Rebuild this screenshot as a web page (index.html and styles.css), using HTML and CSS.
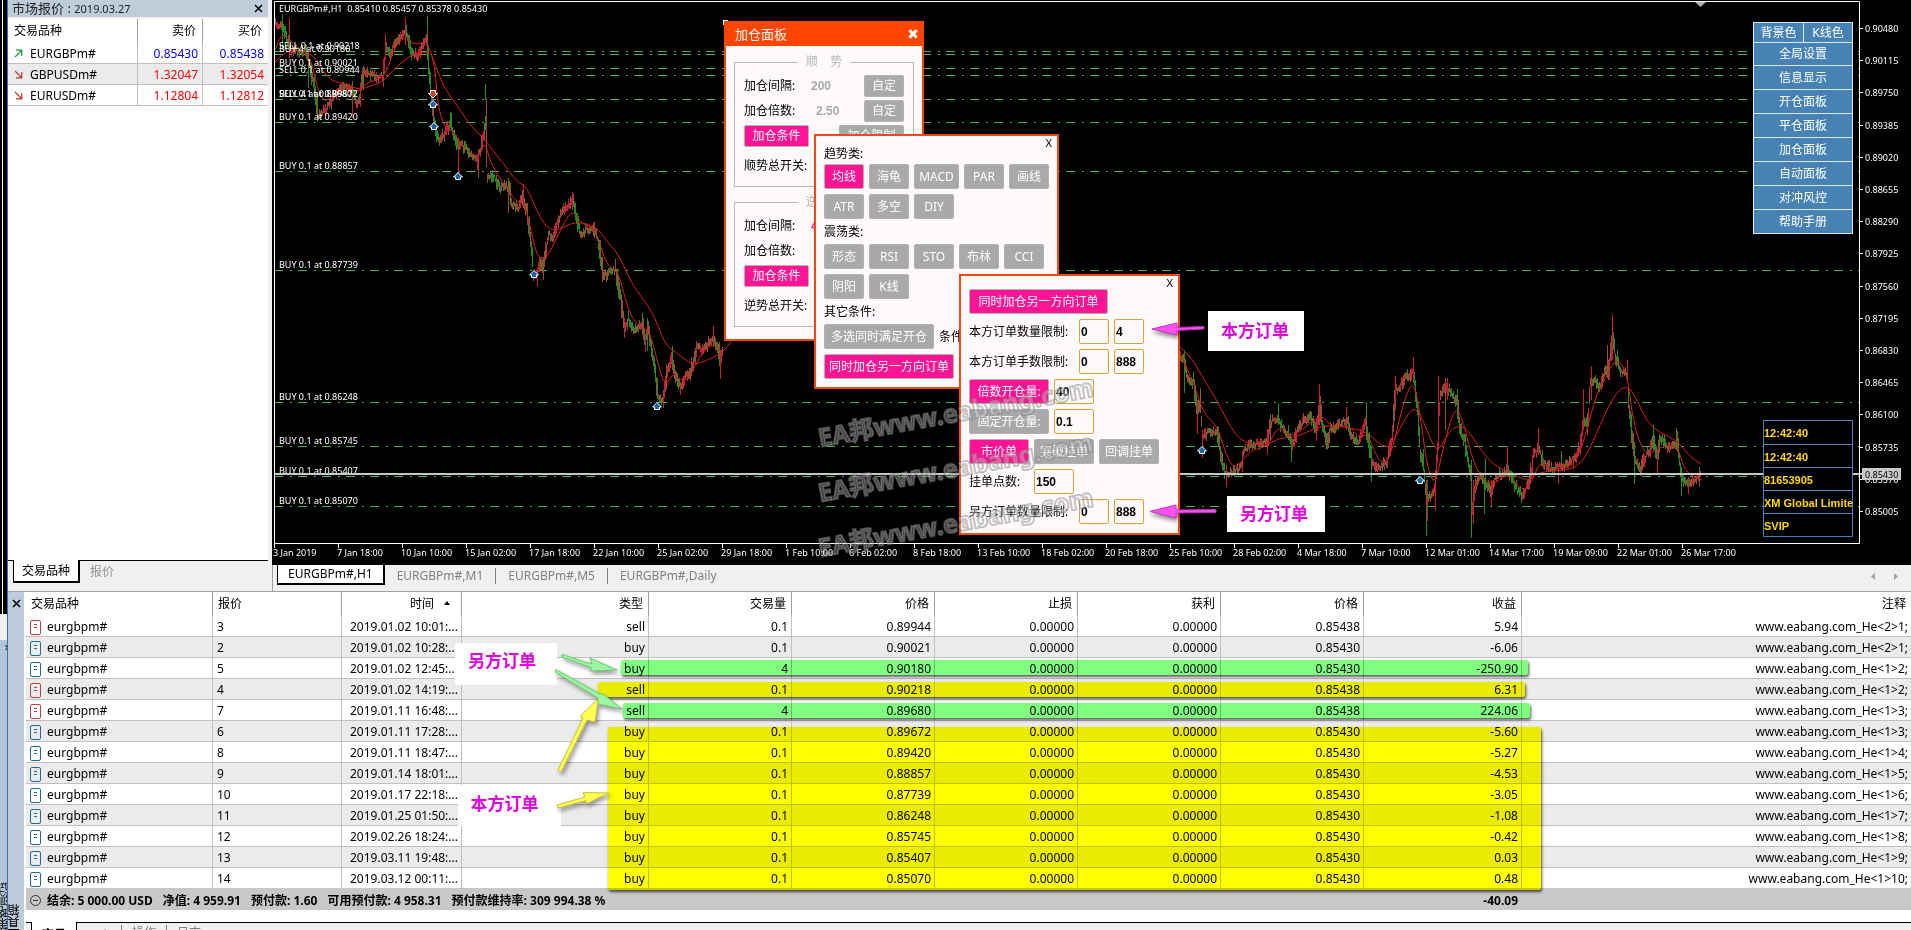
FILE: index.html
```html
<!DOCTYPE html>
<html lang="zh-CN">
<head>
<meta charset="utf-8">
<title>EURGBPm#,H1</title>
<link rel="stylesheet" href="styles.css">
</head>
<body>
<div class="app">
  <aside class="behind" aria-hidden="true">
    <div class="behind-chart"></div>
    <div class="behind-gap"></div>
    <div class="behind-side"><span class="behind-x">✕</span><span class="vertical">策略测试</span></div>
  </aside>

  <div class="main">
    <div class="top">
      <section class="market">
        <header class="market-title">
          <h1>市场报价 : <span>2019.03.27</span></h1>
          <button class="close" aria-label="关闭"><svg width="9" height="9" viewBox="0 0 9 9"><path d="M1 1L8 8M8 1L1 8"/></svg></button>
        </header>
        <table class="quotes">
          <colgroup><col class="q-name"><col><col></colgroup>
          <thead><tr><th>交易品种</th><th>卖价</th><th>买价</th></tr></thead>
          <tbody>
            <tr class="up"><td><svg class="dir" width="9" height="9" viewBox="0 0 9 9"><path d="M1 8L7.5 1.5M2 1.2H7.8V7"/></svg>EURGBPm#</td><td>0.85430</td><td>0.85438</td></tr>
            <tr class="down"><td><svg class="dir" width="9" height="9" viewBox="0 0 9 9"><path d="M1 1L7.5 7.5M7.8 2V7.8H2"/></svg>GBPUSDm#</td><td>1.32047</td><td>1.32054</td></tr>
            <tr class="down"><td><svg class="dir" width="9" height="9" viewBox="0 0 9 9"><path d="M1 1L7.5 7.5M7.8 2V7.8H2"/></svg>EURUSDm#</td><td>1.12804</td><td>1.12812</td></tr>
          </tbody>
        </table>
        <div class="market-fill"></div>
        <nav class="market-tabs"><button class="on">交易品种</button><button>报价</button></nav>
      </section>

      <section class="chart-col">
        <div class="chart">
          <svg id="plot" class="plot" viewBox="272 0 1639 565"></svg>

          <section class="win win-add">
            <header><h2>加仓面板</h2><button aria-label="关闭">✖</button></header>
            <div class="win-body">
              <fieldset>
                <legend>顺    势</legend>
                <div class="line"><span>加仓间隔:</span><b class="v1">200</b><button class="gray w40">自定</button></div>
                <div class="line"><span>加仓倍数:</span><b class="v2">2.50</b><button class="gray w40">自定</button></div>
                <div class="line"><button class="pink w65">加仓条件</button><button class="gray w65">加仓限制</button></div>
                <div class="line last"><span>顺势总开关:</span></div>
              </fieldset>
              <fieldset>
                <legend>逆    势</legend>
                <div class="line"><span>加仓间隔:</span><b class="v1 hot">400</b><button class="gray w40">自定</button></div>
                <div class="line"><span>加仓倍数:</span><b class="v2">2.50</b><button class="gray w40">自定</button></div>
                <div class="line"><button class="pink w65">加仓条件</button><button class="gray w65">加仓限制</button></div>
                <div class="line last"><span>逆势总开关:</span></div>
              </fieldset>
            </div>
          </section>

          <section class="win win-cond">
            <button class="x" aria-label="关闭">X</button>
            <h3>趋势类:</h3>
            <div class="btns"><button class="pink w40">均线</button><button class="gray w40">海龟</button><button class="gray w45">MACD</button><button class="gray w40">PAR</button><button class="gray w40">画线</button></div>
            <div class="btns"><button class="gray w40">ATR</button><button class="gray w40">多空</button><button class="gray w40">DIY</button></div>
            <h3>震荡类:</h3>
            <div class="btns"><button class="gray w40">形态</button><button class="gray w40">RSI</button><button class="gray w40">STO</button><button class="gray w40">布林</button><button class="gray w40">CCI</button></div>
            <div class="btns"><button class="gray w40">阴阳</button><button class="gray w40">K线</button></div>
            <h3>其它条件:</h3>
            <div class="btns"><button class="gray w110">多选同时满足开仓</button><span>条件</span></div>
            <div class="btns"><button class="pink w130">同时加仓另一方向订单</button></div>
          </section>

          <section class="win win-limit">
            <button class="x" aria-label="关闭">X</button>
            <div class="btns"><button class="pink w139">同时加仓另一方向订单</button></div>
            <div class="btns"><label for="n1">本方订单数量限制:</label><input id="n1" class="w30" value="0"><input aria-label="本方订单数量上限" class="w30" value="4"></div>
            <div class="btns"><label for="n2">本方订单手数限制:</label><input id="n2" class="w30" value="0"><input aria-label="本方订单手数上限" class="w30" value="888"></div>
            <div class="btns"><button class="pink w80">倍数开仓量:</button><input aria-label="倍数开仓量" class="w40" value="40"></div>
            <div class="btns"><button class="gray w80">固定开仓量:</button><input aria-label="固定开仓量" class="w40" value="0.1"></div>
            <div class="btns"><button class="pink w60">市价单</button><button class="gray w60">突破挂单</button><button class="gray w60">回调挂单</button></div>
            <div class="btns"><label class="short" for="n3">挂单点数:</label><input id="n3" class="w40" value="150"></div>
            <div class="btns"><label for="n4">另方订单数量限制:</label><input id="n4" class="w30" value="0"><input aria-label="另方订单数量上限" class="w30" value="888"></div>
          </section>

          <nav class="menu">
            <div class="menu-pair"><button>背景色</button><button>K线色</button></div>
            <button>全局设置</button><button>信息显示</button><button>开仓面板</button><button>平仓面板</button><button>加仓面板</button><button>自动面板</button><button>对冲风控</button><button>帮助手册</button>
          </nav>

          <ul class="info"><li>12:42:40</li><li>12:42:40</li><li>81653905</li><li>XM Global Limite</li><li>SVIP</li></ul>

          <svg class="marks" viewBox="272 0 1639 565">
            <g class="wm">
              <text transform="translate(820 447) rotate(-10.5)">EA邦www.eabang.com</text>
              <text transform="translate(820 502) rotate(-10.5)">EA邦www.eabang.com</text>
              <text transform="translate(820 557) rotate(-10.5)">EA邦www.eabang.com</text>
            </g>
            <g class="pinkarrow">
              <path d="M1204 326.500L1177 327.500V323L1152 329L1177 335V330.500L1204 329Z"/>
              <path d="M1216 509.500L1176 510V505L1150 511.500L1176 518V513L1216 512.500Z"/>
            </g>
          </svg>
          <span class="note n-own">本方订单</span>
          <span class="note n-other">另方订单</span>
        </div>
        <nav class="chart-tabs">
          <button class="on">EURGBPm#,H1</button><button>EURGBPm#,M1</button><button>EURGBPm#,M5</button><button>EURGBPm#,Daily</button>
          <span class="scrollers"><button aria-label="向左"><svg width="4" height="7" viewBox="0 0 4 7"><path d="M4 0V7L0 3.5Z"/></svg></button><button aria-label="向右"><svg width="4" height="7" viewBox="0 0 4 7"><path d="M0 0V7L4 3.5Z"/></svg></button></span>
        </nav>
      </section>
    </div>

    <section class="terminal">
      <div class="rail"><button class="close" aria-label="关闭"><svg width="9" height="9" viewBox="0 0 9 9"><path d="M1 1L8 8M8 1L1 8"/></svg></button><span class="vertical">工具箱</span></div>
      <div class="orders-wrap">
        <table class="orders">
          <colgroup><col class="c-sym"><col class="c-id"><col class="c-time"><col class="c-type"><col class="c-n"><col class="c-n"><col class="c-n"><col class="c-n"><col class="c-n"><col class="c-pl"><col></colgroup>
          <thead><tr><th>交易品种</th><th>报价</th><th>时间<svg class="sort" width="6" height="4" viewBox="0 0 6 4"><path d="M0 4H6L3 0Z"/></svg></th><th>类型</th><th>交易量</th><th>价格</th><th>止损</th><th>获利</th><th>价格</th><th>收益</th><th>注释</th></tr></thead>
          <tbody id="rows"></tbody>
          <tfoot><tr><td colspan="9"><svg class="minus" width="11" height="11" viewBox="0 0 11 11"><circle cx="5.5" cy="5.5" r="5"/><path d="M3 5.500H8"/></svg><span>结余: 5 000.00 USD</span><span>净值: 4 959.91</span><span>预付款: 1.60</span><span>可用预付款: 4 958.31</span><span>预付款维持率: 309 994.38 %</span></td><td>-40.09</td><td></td></tr></tfoot>
        </table>
        <nav class="term-tabs"><button class="on">交易</button><button>历史</button><button>操作</button><button>日志</button></nav>
        <div class="hl hl-g1"></div>
        <div class="hl hl-y1"></div>
        <div class="hl hl-g2"></div>
        <div class="hl hl-y2"></div>
        <span class="note t-other">另方订单</span>
        <span class="note t-own">本方订单</span>
        <svg class="arrows" width="200" height="180" viewBox="540 640 200 180">
          <g class="ga">
            <path d="M562 654.500L592 664L590 658L617 670L590 671L591.500 667.500L561.500 657Z"/>
            <path d="M556 669.500L600 694L603 694L622 709L598 704L598 698L555 672Z"/>
          </g>
          <g class="ya">
            <path d="M558 770L583 718L580 716L598 699L595 722L587 720L561 772Z"/>
            <path d="M557 805L585 797L583 792.500L609 793L586 804L586 800.500L558 808Z"/>
          </g>
        </svg>
      </div>
    </section>
  </div>
</div>
<script src="app.js"></script>
</body>
</html>
```
FILE: styles.css
```css
* { box-sizing: border-box; }
body { margin: 0; background: #f0f0f0; color: #000; overflow: hidden; font: 12px/16px "Noto Sans", "Noto Sans CJK SC", sans-serif; }
button { font: inherit; color: inherit; background: none; border: 0; padding: 0; margin: 0; white-space: nowrap; }
h1, h2, h3, ul, fieldset { margin: 0; padding: 0; font: inherit; }
table { border-collapse: separate; border-spacing: 0; table-layout: fixed; width: 100%; }
th { font-weight: 400; }
svg { display: block; }
.app { display: flex; height: 100vh; }
.main { flex: 1; min-width: 0; display: flex; flex-direction: column; }
.top { display: flex; align-items: stretch; border-bottom: 1px solid #a0a0a0; }

/* edge of the window lying underneath */
.behind { width: 8px; border-right: 1px solid #3a6ea5; display: flex; flex-direction: column; overflow: hidden; }
.behind-chart { height: 614px; background: linear-gradient(90deg, #000 2px, #fff 2px, #fff 3px, #000 3px); }
.behind-gap { height: 26px; background: #f0f0f0; }
.behind-side { flex: 1; background: #b4c5d8; display: flex; flex-direction: column; justify-content: space-between; }
.behind-x { font-size: 9px; padding-left: 4px; }
.vertical { writing-mode: vertical-rl; transform: rotate(180deg); line-height: 14px; }
.behind-side .vertical { width: 8px; height: 52px; line-height: 8px; }

.close { display: grid; place-items: center; width: 16px; height: 16px; }
.close path { stroke: #000; stroke-width: 1.5; }

/* market watch */
.market { width: 260px; margin-right: 4px; display: flex; flex-direction: column; background: #f0f0f0; }
.market-title { display: flex; justify-content: space-between; align-items: center; height: 17px; padding: 0 2px 0 4px; background: #bfcddb; color: #222; }
.market-title h1 { font-size: 13px; }
.market-title span { font-size: 11px; }
.quotes { background: #fff; border-top: 2px solid #f0f0f0; }
.q-name { width: 130px; }
.quotes th { height: 24px; padding: 0 6px; text-align: right; border-right: 1px solid #a0a0a0; }
.quotes td { height: 21px; padding: 2px 4px 0; text-align: right; border-right: 1px solid #c0c0c0; border-bottom: 1px solid #c0c0c0; }
.quotes th:first-child { text-align: left; }
.quotes td:first-child { text-align: left; padding-left: 6px; }
.quotes th:last-child, .quotes td:last-child { border-right: 0; }
.quotes tr:nth-child(2) td { background: #ebebeb; }
.up { color: #00f; } .down { color: #f00; }
.quotes td:first-child { color: #000; }
.dir { display: inline-block; margin-right: 7px; }
.dir path { fill: none; stroke: #c0392b; stroke-width: 1.2; }
.up .dir path { stroke: #1d9a3c; }
.market-fill { flex: 1; background: #fff; border-bottom: 1px solid #000; }
.market-tabs { height: 30px; padding-left: 5px; display: flex; align-items: flex-start; color: #909090; }
.market-tabs button { height: 21px; padding: 0 10px; }
.market-tabs .on { background: #fff; color: #000; border: 1px solid #000; border-width: 0 2px 2px 1px; padding: 0 8px; margin-top: -1px; height: 23px; }

/* chart */
.chart-col { flex: 1; min-width: 0; }
.chart { position: relative; background: #000; overflow: hidden; }
.plot, .marks { width: 100%; }
.marks { position: absolute; left: 0; top: 0; pointer-events: none; }
.plot text { font: 9px "Noto Sans", sans-serif; fill: #fff; }
.frame { fill: none; stroke: #fff; }
.orderline { stroke: #4caf50; stroke-dasharray: 9 7 2 6; }
.ma { fill: none; stroke: #d8201c; }
.bar-r { stroke: #cc1a3c; } .bar-g { stroke: #228b22; } .bar-m { stroke: #8c5232; }
.price { stroke: #c8c8c8; stroke-width: 2; }
.tag { fill: #c8c8c8; }
.plot .tagtext { fill: #000; }
.mk { stroke: #fff; }
.wm text { font: bold 25px "Noto Sans", "Noto Sans CJK SC", sans-serif; fill: rgba(255,255,255,.25); stroke: rgba(120,120,120,.5); stroke-width: 2; paint-order: stroke; }
.pinkarrow { fill: #ff50f0; stroke: #c030c0; stroke-width: 1; filter: drop-shadow(1px 3px 2px rgba(0,0,0,.45)); }

.note { position: absolute; background: #fff; color: #e000e0; font: bold 17px/24px "Noto Sans CJK SC", sans-serif; display: grid; place-items: center; white-space: nowrap; }
.n-own { left: 936px; top: 311px; width: 96px; height: 40px; padding: 0 2px 3px 0; }
.n-other { left: 955px; top: 496px; width: 98px; height: 36px; padding: 0 4px 2px 0; }

/* floating windows */
.win { position: absolute; background: #fffafa; border: 2px solid #f04a10; }
.win-add { left: 452px; top: 21px; width: 200px; border-color: #ff4500; }
.win-add header { height: 23px; background: #ff4500; color: #fff; display: flex; justify-content: space-between; align-items: center; padding: 0 3px 2px 9px; }
.win-add h2 { font-size: 13px; }
.win-add header button { font: 14px/14px "DejaVu Sans", sans-serif; }
.win-body { padding: 6px 8px 12px; display: grid; gap: 5px; }
fieldset { border: 1px solid #b8b8b8; height: 135px; padding: 3px 9px 0; min-width: 0; }
legend { margin: 0 auto; padding: 0 8px; color: #b4b4b4; height: 20px; line-height: 20px; white-space: pre; }
.line { display: flex; align-items: center; justify-content: space-between; height: 22px; margin-bottom: 3px; position: relative; }
.line.last { height: 32px; }
.line b { position: absolute; left: 67px; color: #a9a9a9; font: bold 12px "Liberation Sans", sans-serif; }
.line .v2 { left: 72px; }
.line .hot { color: #ff1493; }
.pink, .gray { color: #fff; border: 1px solid #b4b0b0; border-radius: 2px; height: 25px; flex: none; }
.pink { background: #ff1493; }
.gray { background: #a9a9a9; }
.line .pink, .line .gray { height: 22px; }
.w30 { width: 30px; } .w40 { width: 40px; } .w45 { width: 45px; } .w60 { width: 60px; } .w65 { width: 65px; } .w80 { width: 80px; }
.w110 { width: 110px; } .w130 { width: 130px; } .w139 { width: 139px; }
.win-cond { left: 542px; top: 134px; width: 245px; padding: 5px 8px 3px; }
.win-limit { left: 687px; top: 274px; width: 221px; padding: 13px 8px 4px; }
.x { position: absolute; right: 5px; top: 0; font-size: 11px; line-height: 14px; }
.win h3 { height: 25px; line-height: 25px; }
.win h3:first-of-type { height: 23px; }
.btns { display: flex; gap: 5px; height: 25px; align-items: center; margin-bottom: 5px; }
.win-cond .btns:has(+ h3) { margin-bottom: 0; }
.btns label { width: 105px; white-space: nowrap; }
.btns .short { width: 60px; }
.win input { height: 25px; border: 1px solid #dfa040; border-radius: 2px; background: #fffafa; padding: 0 0 0 1px; font: bold 12px "Liberation Sans", sans-serif; flex: none; }

.menu { position: absolute; right: 58px; top: 22px; width: 100px; display: grid; border: 1px solid #dde6ee; background: #4682b4; color: #fff; }
.menu > button { height: 24px; border-top: 1px solid #dde6ee; }
.menu-pair { display: grid; grid-template-columns: 1fr 1fr; }
.menu-pair button { height: 19px; }
.menu-pair + button { height: 23px; }
.menu-pair button + button { border-left: 1px solid #dde6ee; }
.info { position: absolute; right: 58px; top: 420px; width: 90px; list-style: none; border: 1px solid #4682b4; background: #000; color: #ffd700; font: bold 11px/24px "Liberation Sans", sans-serif; }
.info li { height: 23px; white-space: nowrap; }
.info li + li { border-top: 1px solid #4682b4; }

.chart-tabs { height: 26px; padding-left: 4px; display: flex; align-items: flex-start; color: #808080; border-left: 1px solid #a0a0a0; }
.chart-tabs > button { padding: 0 12px; height: 16px; margin-top: 3px; border-right: 1px solid #808080; }
.chart-tabs > button:nth-of-type(4) { border-right: 0; }
.chart-tabs .on { background: #fff; color: #000; border: 1px solid #000; border-width: 0 2px 2px 1px; height: 20px; margin: 0; padding: 0 10px; }
.scrollers { margin: 8px 13px 0 auto; display: flex; gap: 19px; }
.scrollers path { fill: #a0a0a0; }

/* terminal */
.terminal { flex: 1; min-height: 0; display: flex; background: #fff; }
.rail { width: 16px; margin-right: 2px; background: #bdccda; display: flex; flex-direction: column; justify-content: space-between; padding-top: 3px; }
.rail .vertical { margin-bottom: -10px; }
.orders-wrap { flex: 1; min-width: 0; position: relative; }
.c-sym { width: 187px; } .c-id { width: 129px; } .c-time { width: 120px; } .c-type { width: 187px; } .c-n { width: 143px; } .c-pl { width: 158px; }
.orders th, .orders td { text-align: right; white-space: nowrap; border-right: 1px solid #c0c0c0; }
.orders th { height: 24px; padding: 0 5px; border-color: #a0a0a0; }
.orders td { height: 21px; padding: 1px 3px 0; border-bottom: 1px solid #c0c0c0; line-height: 19px; }
.orders th:first-child, .orders th:nth-child(2), .orders td:first-child, .orders td:nth-child(2) { text-align: left; }
.orders th:last-child, .orders td:last-child { border-right: 0; }
.orders th:nth-child(3) { padding-right: 11px; }
.orders td:first-child, .orders td:nth-child(2) { padding-left: 4px; }
.orders tbody tr:nth-child(even) td { background: #ebebeb; }
.orders tbody tr:last-child td { border-bottom-color: #c8c8c8; }
.sort { display: inline-block; margin: 0 0 3px 10px; }
.doc { display: inline-block; vertical-align: middle; margin: 0 6px 1px 0; }
.doc rect, .doc path { fill: none; stroke: #1f6b94; }
.sell .doc rect, .sell .doc path { stroke: #c0403c; }
.orders tfoot td { background: #c8c8c8; border: 0; font-weight: 700; }
.orders tfoot span { margin-right: 10px; }
.orders tfoot td:nth-child(2) { text-align: right; padding-right: 4px; }
.minus { display: inline-block; vertical-align: middle; margin: 0 6px 2px 0; }
.minus * { fill: none; stroke: #333; }
.term-tabs { margin-top: 12px; border-top: 1px solid #000; background: #f0f0f0; height: 24px; padding-left: 5px; display: flex; color: #808080; }
.term-tabs button { padding: 2px 10px 0; }
.term-tabs button + button + button { border-left: 1px solid #808080; height: 16px; margin-top: 2px; padding-top: 0; }
.term-tabs .on { background: #fff; color: #000; font-weight: 700; border: 1px solid #000; border-top: 0; margin-top: -1px; padding-top: 3px; }
.hl { position: absolute; mix-blend-mode: multiply; box-shadow: 1px 2px 3px rgba(0,0,0,.65); border-radius: 2px; }
.hl-g1, .hl-g2 { background: #80ff80; height: 15px; width: 907px; }
.hl-y1, .hl-y2 { background: #ff0; }
.hl-g1 { left: 595px; top: 68px; }
.hl-y1 { left: 572px; top: 90px; width: 927px; height: 15px; }
.hl-g2 { left: 597px; top: 111px; }
.hl-y2 { left: 582px; top: 135px; width: 933px; height: 163px; }
.t-other { left: 429px; top: 51px; width: 102px; height: 42px; padding: 0 8px 8px 0; }
.t-own { left: 432px; top: 193px; width: 103px; height: 41px; padding: 0 10px 5px 0; }
.arrows { position: absolute; left: 514px; top: 48px; filter: drop-shadow(2px 3px 2px rgba(0,0,0,.4)); }
.ga { fill: #9df5a0; stroke: #70c878; }
.ya { fill: #ffff50; stroke: #c8c040; }
```
FILE: app.js
```js
// Orders table
const orders = [
  ['sell', 3, '2019.01.02 10:01:...', '0.1', '0.89944', '0.85438', '5.94', '<2>1'],
  ['buy', 2, '2019.01.02 10:28:...', '0.1', '0.90021', '0.85430', '-6.06', '<2>1'],
  ['buy', 5, '2019.01.02 12:45:...', '4', '0.90180', '0.85430', '-250.90', '<1>2'],
  ['sell', 4, '2019.01.02 14:19:...', '0.1', '0.90218', '0.85438', '6.31', '<1>2'],
  ['sell', 7, '2019.01.11 16:48:...', '4', '0.89680', '0.85438', '224.06', '<1>3'],
  ['buy', 6, '2019.01.11 17:28:...', '0.1', '0.89672', '0.85430', '-5.60', '<1>3'],
  ['buy', 8, '2019.01.11 18:47:...', '0.1', '0.89420', '0.85430', '-5.27', '<1>4'],
  ['buy', 9, '2019.01.14 18:01:...', '0.1', '0.88857', '0.85430', '-4.53', '<1>5'],
  ['buy', 10, '2019.01.17 22:18:...', '0.1', '0.87739', '0.85430', '-3.05', '<1>6'],
  ['buy', 11, '2019.01.25 01:50:...', '0.1', '0.86248', '0.85430', '-1.08', '<1>7'],
  ['buy', 12, '2019.02.26 18:24:...', '0.1', '0.85745', '0.85430', '-0.42', '<1>8'],
  ['buy', 13, '2019.03.11 19:48:...', '0.1', '0.85407', '0.85430', '0.03', '<1>9'],
  ['buy', 14, '2019.03.12 00:11:...', '0.1', '0.85070', '0.85430', '0.48', '<1>10']
];
const esc = s => String(s).replace(/</g, '&lt;').replace(/>/g, '&gt;');
const doc = '<svg class="doc" width="11" height="15" viewBox="0 0 11 15"><rect x=".5" y=".5" width="10" height="14" rx="1.5"/><path d="M4 4.500H7M4 7.500H7"/></svg>';
document.getElementById('rows').innerHTML = orders.map(o => {
  const cells = [o[1], o[2], o[0], o[3], o[4], '0.00000', '0.00000', o[5], o[6], 'www.eabang.com_He' + o[7] + ';'];
  return '<tr class="' + o[0] + '"><td>' + doc + 'eurgbpm#</td>' + cells.map(c => '<td>' + esc(c) + '</td>').join('') + '</tr>';
}).join('');

// Chart: one bar per pixel column, interpolated between [x, y] turning points
const path1 = [275,25,282,24,290,50,305,52,308,60,314,85,318,115,322,112,330,104,334,95,342,86,352,88,356,103,360,95,363,69,378,78,383,74,385,48,390,52,397,40,405,32,412,52,417,55,422,46,427,38,429,80,433,112,436,135,440,140,445,132,450,122,452,132,457,145,462,144,470,155,477,160,482,142,485,125,487,180,492,175,500,188,508,185,512,205,518,207,522,197,527,212,530,240,533,275,537,275,540,262,543,268,548,235,553,235,560,215,567,206,572,200,577,220,580,235,585,230,593,227,598,242,603,277,615,268,622,310,625,328,628,320,633,332,642,325,645,340,648,325,652,355,655,375,658,398,663,400,667,370,672,358,675,375,680,388,685,378,690,372,697,345,703,350,708,343,713,340,718,350,720,365,723,345];
const path2 = [1179,355,1183,360,1187,378,1193,382,1197,410,1200,402,1202,438,1207,432,1217,433,1220,450,1225,475,1233,472,1242,465,1243,450,1250,445,1267,442,1270,422,1278,418,1283,430,1288,435,1292,445,1297,432,1303,420,1310,416,1316,430,1319,402,1322,425,1327,442,1330,430,1340,424,1347,420,1350,435,1358,443,1366,422,1368,440,1372,465,1380,467,1387,460,1392,435,1395,388,1400,388,1405,373,1410,377,1413,370,1417,405,1420,455,1423,465,1426,498,1430,495,1435,490,1438,430,1440,395,1445,388,1450,390,1457,405,1460,430,1465,445,1470,475,1472,505,1475,485,1480,475,1485,482,1490,492,1495,478,1507,470,1513,480,1517,490,1522,497,1530,480,1533,455,1538,447,1543,462,1550,468,1562,466,1573,460,1580,447,1583,420,1587,425,1590,382,1595,380,1600,387,1605,370,1608,375,1612,338,1615,355,1620,370,1627,372,1628,400,1632,440,1635,463,1640,468,1645,456,1650,452,1653,440,1657,458,1660,438,1667,447,1677,443,1680,472,1685,482,1692,482,1701,475];
const spikes = [[282,14,50,'g'],[289,18,58,'r'],[317,95,120,'g'],[308,60,88,'g'],[405,18,45,'r'],[427,16,60,'g'],[485,84,100,'g'],[486,98,150,'m'],[451,113,130,'g'],[458,140,180,'r'],[478,150,178,'m'],[352,95,118,'r'],[363,66,90,'g'],[385,34,60,'r'],[523,184,205,'r'],[508,178,213,'m'],[572,192,210,'r'],[594,222,232,'r'],[537,268,284,'r'],[624,318,338,'r'],[642,313,330,'g'],[647,318,351,'g'],[663,390,408,'g'],[713,326,345,'r'],[720,350,375,'r'],[672,352,370,'g'],[1184,350,393,'g'],[1197,400,434,'r'],[1202,430,458,'r'],[1226,465,487,'r'],[1270,414,440,'m'],[1278,403,425,'g'],[1319,384,425,'r'],[1316,425,434,'g'],[1291,440,462,'g'],[1346,407,430,'r'],[1366,402,440,'g'],[1371,450,482,'g'],[1395,376,410,'r'],[1413,357,380,'r'],[1426,480,536,'g'],[1427,480,521,'r'],[1435,470,510,'r'],[1438,376,450,'r'],[1445,378,430,'m'],[1447,378,400,'r'],[1471,460,538,'g'],[1473,480,524,'r'],[1484,480,514,'g'],[1485,458,490,'g'],[1491,480,506,'r'],[1507,446,475,'r'],[1538,428,455,'r'],[1542,450,466,'g'],[1558,465,484,'r'],[1561,451,470,'g'],[1583,389,430,'r'],[1591,366,400,'r'],[1607,345,375,'m'],[1612,315,360,'r'],[1613,332,350,'g'],[1627,360,380,'r'],[1634,455,484,'g'],[1653,425,445,'g'],[1657,450,474,'r'],[1676,428,450,'g'],[1681,470,496,'g'],[1688,480,494,'r'],[1699,467,487,'m']];
let seed = 7;
const rnd = () => (seed = (seed * 16807) % 2147483647) / 2147483647;
const bars = { r: '', g: '', m: '' };
function build(p) {
  for (let i = 0; i < p.length - 2; i += 2) {
    const slope = (p[i + 3] - p[i + 1]) / (p[i + 2] - p[i]);
    for (let x = p[i]; x < p[i + 2]; x++) {
      const y = p[i + 1] + slope * (x - p[i]) + (rnd() - .5) * 4;
      const amp = Math.min(12, 4 + Math.abs(slope));
      const a = Math.round(y - amp * (.3 + rnd())), b = Math.round(y + amp * (.3 + rnd()));
      const r = rnd();
      const k = slope > 1 ? (r < .7 ? 'g' : 'm') : slope < -1 ? (r < .5 ? 'r' : 'm') : r < .6 ? 'm' : r < .8 ? 'r' : 'g';
      bars[k] += 'M' + (x + .5) + ' ' + a + 'V' + b;
    }
  }
}
build(path1); build(path2);
spikes.forEach(s => bars[s[3]] += 'M' + (s[0] + .5) + ' ' + s[1] + 'V' + s[2]);

const mas = [
  '275,62 287,49 303,51 313,55 322,70 332,81 342,83 360,90 370,86 383,82 393,70 410,55 428,51 433,57 443,87 457,105 470,125 483,138 503,163 517,182 527,187 537,212 547,228 557,231 575,221 597,227 607,242 618,253 633,287 652,310 665,345 677,353 692,365 703,362 723,353 732,340',
  '275,50 282,30 292,43 303,52 312,62 317,88 325,104 337,90 350,87 358,93 367,82 385,78 393,50 405,35 413,45 428,42 435,67 438,107 445,128 453,130 460,143 478,160 485,140 490,163 503,183 517,203 525,203 533,240 538,258 547,258 557,237 572,208 580,223 595,228 607,267 618,270 628,310 637,325 650,332 657,360 665,388 673,372 682,382 690,377 700,355 713,343 723,353',
  '1178,346 1190,355 1200,373 1218,402 1230,427 1243,443 1267,446 1278,438 1297,437 1322,425 1347,427 1367,432 1377,442 1387,448 1393,442 1407,415 1415,407 1423,420 1432,443 1438,452 1450,430 1460,425 1470,432 1477,445 1493,465 1507,471 1528,482 1538,472 1567,470 1578,466 1588,453 1600,425 1615,393 1628,385 1637,400 1647,422 1660,433 1677,440 1690,457 1701,464',
  '1178,350 1193,380 1203,413 1218,427 1225,453 1235,471 1250,450 1268,447 1278,425 1288,437 1300,432 1322,413 1330,427 1350,425 1360,440 1367,432 1377,458 1383,463 1392,453 1402,407 1413,378 1420,413 1427,467 1435,487 1443,447 1455,405 1463,420 1475,470 1492,487 1508,472 1520,490 1530,487 1540,460 1550,470 1567,468 1578,458 1587,430 1597,392 1605,380 1615,358 1627,370 1633,423 1645,457 1660,447 1677,443 1685,473 1702,480'
];
const smooth = s => {
  const p = s.split(' ').map(q => q.split(',').map(Number));
  let d = 'M' + p[0];
  for (let i = 1; i < p.length - 1; i++) d += 'Q' + p[i] + ' ' + (p[i][0] + p[i + 1][0]) / 2 + ',' + (p[i][1] + p[i + 1][1]) / 2;
  return d + 'L' + p[p.length - 1];
};

const lines = [[51.5,'SELL 0.1 at 0.90218'],[54.5,'BUY 4 at 0.90180'],[68.5,'BUY 0.1 at 0.90021'],[75.5,'SELL 0.1 at 0.89944'],[99.5,'SELL 4 at 0.89680'],[99.5,'BUY 0.1 at 0.89672'],[122.5,'BUY 0.1 at 0.89420'],[171.5,'BUY 0.1 at 0.88857'],[270.5,'BUY 0.1 at 0.87739'],[402.5,'BUY 0.1 at 0.86248'],[446.5,'BUY 0.1 at 0.85745'],[476.5,'BUY 0.1 at 0.85407'],[506.5,'BUY 0.1 at 0.85070']];
const prices = ['0.90480','0.90115','0.89750','0.89385','0.89020','0.88655','0.88290','0.87925','0.87560','0.87195','0.86830','0.86465','0.86100','0.85735','0.85370','0.85005'];
const times = ['3 Jan 2019','7 Jan 18:00','10 Jan 10:00','15 Jan 02:00','17 Jan 18:00','22 Jan 10:00','25 Jan 02:00','29 Jan 18:00','1 Feb 10:00','6 Feb 02:00','8 Feb 18:00','13 Feb 10:00','18 Feb 02:00','20 Feb 18:00','25 Feb 10:00','28 Feb 02:00','4 Mar 18:00','7 Mar 10:00','12 Mar 01:00','14 Mar 17:00','19 Mar 09:00','22 Mar 01:00','26 Mar 17:00'];
const buys = [[433,104],[434,126],[458,176],[534,274],[657,406],[1202,450],[1420,480]];

let s = '';
lines.forEach(l => s += '<path class="orderline" d="M274 ' + l[0] + 'H1859"/>');
for (const k of ['g', 'm', 'r']) s += '<path class="bar-' + k + '" d="' + bars[k] + '"/>';
mas.forEach(m => s += '<path class="ma" d="' + smooth(m) + '"/>');
lines.forEach(l => s += '<text x="279" y="' + (l[0] - 2.5) + '">' + l[1] + '</text>');
s += '<path class="price" d="M275 474H1862"/>';
s += '<path class="mk" fill="#d03c28" d="M433 98L428.500 93.500H430.500V90.500H435.500V93.500H437.500Z"/>';
buys.forEach(([x, y]) => s += '<path class="mk" fill="#1464a8" d="M' + x + ' ' + (y - 3.5) + 'l4.500 4.500h-2v2.500h-5v-2.500h-2z"/>');
s += '<path class="frame" d="M274.500 543V1.500H1859.500V543.500H274.500"/>';
prices.forEach((p, i) => {
  const y = Math.round(28 + i * 32.2);
  s += '<path class="frame" d="M1860 ' + (y + .5) + 'h3"/><text x="1865" y="' + (y + 4) + '">' + p + '</text>';
});
times.forEach((t, i) => {
  const x = 274 + i * 64;
  s += '<path class="frame" d="M' + (x + .5) + ' 543v5"/><text x="' + (x - 1) + '" y="556">' + t + '</text>';
});
s += '<path fill="#b0b0b0" d="M1695 2H1706L1700.500 7Z"/><path fill="#fff" d="M723 20h5v1h-4v4h-1z"/>';
s += '<rect class="tag" x="1862" y="468" width="39" height="12"/><text class="tagtext" x="1865" y="478">0.85430</text>';
s += '<text x="279" y="12" xml:space="preserve">EURGBPm#,H1  0.85410 0.85457 0.85378 0.85430</text>';
document.getElementById('plot').innerHTML = s;
```
